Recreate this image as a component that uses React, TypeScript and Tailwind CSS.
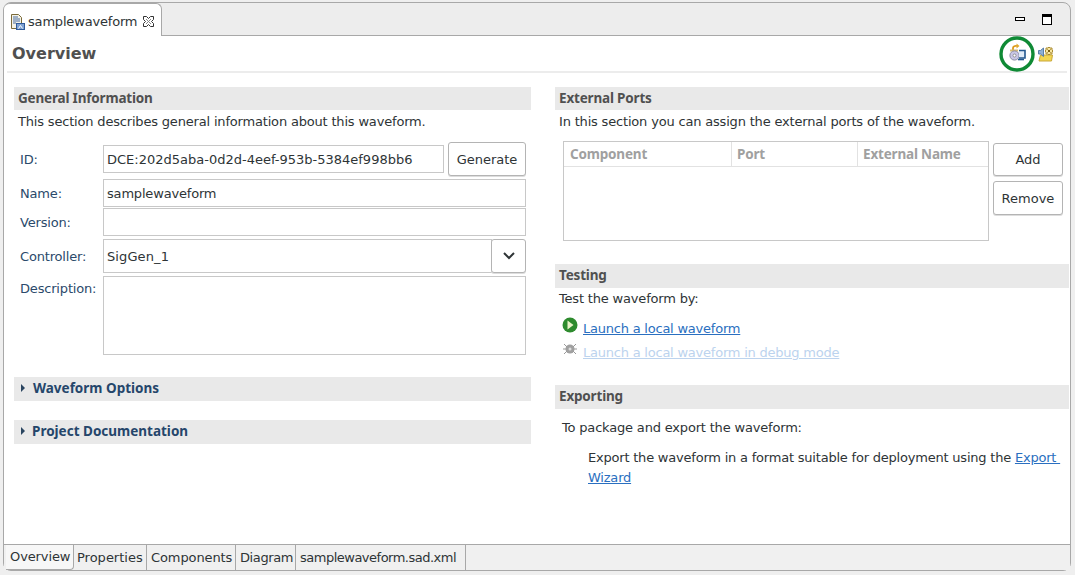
const font = "font-['DejaVu_Sans',sans-serif]";
const boldFont = "font-['Noto_Sans',sans-serif] font-bold text-[13.5px]";

function FileIcon() {
  return (
    <svg width="16" height="16" viewBox="0 0 16 16" className="shrink-0">
      <path d="M1.500 0.500h7l3 3v11h-10z" fill="#f4f2e6" stroke="#7a6a3a" />
      <path d="M3 3h5M3 5h7M3 7h7M3 9h3" stroke="#4a6fa5" />
      <rect x="6.500" y="9.500" width="8" height="6" fill="#7fa2d3" stroke="#2f5a99" />
      <path d="M8.500 14.500l2-3 2 3" stroke="#fff" fill="none" />
    </svg>
  );
}

function CloseIcon() {
  return (
    <svg width="11" height="11" viewBox="0 0 11 11" className="shrink-0">
      <path d="M.5.500h3L5.500 2.500 7.500.500h3v3L8.500 5.500l2 2v3h-3L5.500 8.500l-2 2h-3v-3L2.500 5.500l-2-2z" fill="#fff" stroke="#333" strokeWidth="1" />
      <path d="M3 3l5 5M8 3l-5 5" stroke="#888" strokeWidth="1" />
    </svg>
  );
}

function SectionHead({ children, className = "h-[23px]" }: { children: React.ReactNode; className?: string }) {
  return <div className={"bg-[#e9e9e9] pl-[4px] flex items-center text-[#505050] " + boldFont + " " + className}>{children}</div>;
}

function Collapsed({ children, gap }: { children: React.ReactNode; gap: string }) {
  return (
    <div className={"h-[24px] pb-[2px] bg-[#e9e9e9] flex items-center text-[#25466b] tracking-normal " + boldFont}>
      <svg width="6" height="8" viewBox="0 0 6 8" className={"ml-[6px] " + gap}><path d="M1 0l4 4-4 4z" fill="#2a4560" /></svg>
      {children}
    </div>
  );
}

function Btn({ children, className = "" }: { children: React.ReactNode; className?: string }) {
  return <div className={"border border-[#b4b4b4] rounded-[3px] bg-white flex items-center justify-center text-[#2e3436] tracking-normal shadow-[0_1px_0_#ddd] " + className}>{children}</div>;
}

function Field({ children, className = "" }: { children?: React.ReactNode; className?: string }) {
  return <div className={"border border-[#c8c8c8] bg-white flex items-center pl-[3px] pt-[1px] text-[#2e3436] " + className}>{children}</div>;
}

function Row({ label, className, top = false, children }: { label: string; className: string; top?: boolean; children: React.ReactNode }) {
  return (
    <div className={"flex " + (top ? "items-start " : "items-center ") + className}>
      <div className={"w-[89px] shrink-0 pl-[6px] text-[#2b4a6b] " + (top ? "pt-[3px]" : "pt-[1px]")}>{label}</div>
      <div className="flex-1 min-w-0">{children}</div>
    </div>
  );
}

export default function App() {
  return (
    <div className={"w-[1075px] h-[575px] bg-[#efefef] pt-[2px] pl-[3px] overflow-hidden text-[13px] tracking-[-0.18px] " + font}>
      <div className="w-[1068px] h-[569px] border border-[#a8a8a8] rounded-[8px] bg-[#ededed] flex flex-col">
        <div className="h-[32px] flex shrink-0 justify-between">
          <div className="w-[158px] h-[33px] -mb-px relative bg-white border-r border-t border-[#a8a8a8] rounded-tr-[6px] rounded-tl-[6px] flex items-center pl-[6px] text-[#2e3436] pt-[3px]">
            <FileIcon />
            <span className="ml-[2px]">samplewaveform</span>
            <span className="ml-[6px]"><CloseIcon /></span>
          </div>
          <div className="flex items-center gap-[17px] pr-[18px] pt-[1px]">
            <div className="w-[10px] h-[4px] border border-black mb-[2px] bg-white" />
            <div className="w-[10px] h-[11px] border border-black border-t-[3px] bg-white" />
          </div>
        </div>
        <div className="flex-1 bg-white border-t border-[#a8a8a8] flex flex-col min-h-0">
          <div className="h-[35px] shrink-0 flex items-center justify-between pl-[8px] pr-[16px] relative z-10">
            <span className="font-bold text-[16px] tracking-normal text-[#505050]">Overview</span>
            <div className="flex items-center gap-[3px]">
              <svg width="36" height="38" viewBox="0 0 36 38" className="-my-[3px]">
                <circle cx="18" cy="19" r="16" fill="none" stroke="#0f8a35" strokeWidth="3.400" />
                <path d="M14 15v-2c0-1.500 2-2.500 4-2" fill="none" stroke="#dd9a1c" strokeWidth="1.800" />
                <path d="M17.500 8.500l3 2.500-3 2.500z" fill="#e2a92c" />
                <path d="M11 14.500h8v2h-8z" fill="#d9bd72" />
                <circle cx="15.500" cy="20.500" r="4.600" fill="#c9c6e6" stroke="#8d8da3" />
                <circle cx="15.500" cy="20.500" r="1.500" fill="#fff" stroke="#777" strokeWidth="0.700" />
                <path d="M20 15.500h6v7.500h-6" fill="#dfeaf7" stroke="#24578f" strokeWidth="1.600" />
                <path d="M19 24.500h6" stroke="#24578f" strokeWidth="1.600" />
              </svg>
              <svg width="16" height="16" viewBox="0 0 16 16">
                <path d="M2.500 9h12l-1 6H1z" fill="#f3d651" stroke="#c9a83a" />
                <path d="M.5 4.500h2l3-2.500v8.500l-3-2.500h-2z" fill="#8fb0d6" stroke="#5a7fa9" />
                <path d="M8 2h2l1-1 1 1h2v2l1 1-1 1v2h-2l-1 1-1-1H8V6L7 5l1-1z" fill="#f7e6a0" stroke="#a98a30" />
                <path d="M9.500 3.500l3 3M12.500 3.500l-3 3" stroke="#7a5a10" />
              </svg>
            </div>
          </div>
          <div className="h-[2px] shrink-0 bg-[#ececec] ml-[3px] mr-[3px]" />
          <div className="flex-1 flex pl-[10px] pr-[1px] pt-[14px] gap-[24px] min-h-0">
            <div className="w-[517px]">
              <SectionHead>General Information</SectionHead>
              <div className="pl-[4px] mt-[2px] h-[18px] text-[#2e3436]">This section describes general information about this waveform.</div>
              <div className="mt-[12px] pr-[5px]">
                <Row label="ID:" className="h-[34px]">
                  <div className="flex items-center gap-[4px]">
                    <Field className="w-[341px] h-[28px] tracking-normal">DCE:202d5aba-0d2d-4eef-953b-5384ef998bb6</Field>
                    <Btn className="flex-1 h-[34px] pt-[1px]">Generate</Btn>
                  </div>
                </Row>
                <Row label="Name:" className="h-[28px] mt-[3px]"><Field className="h-[28px]">samplewaveform</Field></Row>
                <Row label="Version:" className="h-[28px] mt-[1px]"><Field className="h-[28px]" /></Row>
                <Row label="Controller:" className="h-[34px] mt-[3px]">
                  <div className="flex h-[34px]">
                    <Field className="flex-1 h-[34px] tracking-[0.1px]">SigGen_1</Field>
                    <Btn className="w-[35px] h-[34px] -ml-px">
                      <svg width="12" height="8" viewBox="0 0 12 8"><path d="M1 1l5 5 5-5" fill="none" stroke="#2e3436" strokeWidth="2" /></svg>
                    </Btn>
                  </div>
                </Row>
                <Row label="Description:" top className="h-[79px] mt-[3px]"><Field className="h-[79px]" /></Row>
              </div>
              <div className="mt-[22px]"><Collapsed gap="mr-[7px]">Waveform Options</Collapsed></div>
              <div className="mt-[19px]"><Collapsed gap="mr-[6px]">Project Documentation</Collapsed></div>
            </div>
            <div className="w-[514px]">
              <SectionHead>External Ports</SectionHead>
              <div className="pl-[4px] mt-[2px] h-[18px] text-[#2e3436]">In this section you can assign the external ports of the waveform.</div>
              <div className="mt-[11px] pl-[8px] flex gap-[4px] pr-[6px]">
                <div className="w-[426px] h-[100px] border border-[#c8c8c8]">
                  <div className={"h-[25px] grid grid-cols-[167px_126px_1fr] border-b border-[#e2e2e2] text-[#a0a0a0] items-center " + boldFont}>
                    <div className="pl-[6px]">Component</div>
                    <div className="pl-[5px] border-l border-[#e2e2e2] h-full flex items-center">Port</div>
                    <div className="pl-[5px] border-l border-[#e2e2e2] h-full flex items-center">External Name</div>
                  </div>
                </div>
                <div className="flex-1 flex flex-col pt-[2px]">
                  <Btn className="h-[33px]">Add</Btn>
                  <Btn className="h-[34px] mt-[5px] pt-[1px]">Remove</Btn>
                </div>
              </div>
              <div className="mt-[23px]"><SectionHead className="h-[24px] pb-[2px]">Testing</SectionHead></div>
              <div className="pl-[4px] mt-[1px] h-[18px] text-[#2e3436]">Test the waveform by:</div>
              <div className="pl-[7px] mt-[9px] flex items-center gap-[5px] h-[24px] tracking-[-0.22px]">
                <svg width="16" height="16" viewBox="0 0 16 16" className="mt-[-7px]">
                  <circle cx="8" cy="8" r="7.500" fill="#2e8b2e" />
                  <path d="M5.500 3.500l6 4.500-6 4.500z" fill="#e9f3c8" />
                </svg>
                <span className="text-[#2a6fc0] underline pt-[1px]">Launch a local waveform</span>
              </div>
              <div className="pl-[7px] flex items-center gap-[5px] h-[24px] tracking-[-0.22px]">
                <svg width="16" height="16" viewBox="0 0 16 16" className="mt-[-7px]">
                  <circle cx="8" cy="8" r="4.500" fill="#a0a0a0" />
                  <path d="M2 3l3 3M14 3l-3 3M1 8h3M12 8h3M2 13l3-3M14 13l-3-3" stroke="#9a9a9a" />
                  <circle cx="8" cy="8" r="1.500" fill="#ddd" />
                </svg>
                <span className="text-[#bcd3ee] underline pt-[1px]">Launch a local waveform in debug mode</span>
              </div>
              <div className="mt-[21px]"><SectionHead className="h-[24px] pb-[2px]">Exporting</SectionHead></div>
              <div className="pl-[7px] mt-[9px] h-[18px] text-[#2e3436]">To package and export the waveform:</div>
              <div className="pl-[33px] mt-[12px] leading-[20px] text-[#2e3436] tracking-[-0.21px]">
                <div className="whitespace-pre">Export the waveform in a format suitable for deployment using the <span className="text-[#2a6fc0] underline">Export </span></div>
                <div><span className="text-[#2a6fc0] underline">Wizard</span></div>
              </div>
            </div>
          </div>
          <div className="h-[26px] shrink-0 border-t border-[#a8a8a8] bg-[#f0f0f0] flex text-[#2e3436] pl-[2px]">
            <div className="w-[68px] h-[25px] bg-[#f7f7f7] border-r border-b border-[#a8a8a8] rounded-br-[4px] flex items-center pl-[4px] tracking-[-0.1px]">Overview</div>
            <div className="w-[73px] border-r border-[#a8a8a8] flex items-center pl-[3px] tracking-normal">Properties</div>
            <div className="w-[89px] border-r border-[#a8a8a8] flex items-center pl-[4px] tracking-[-0.1px]">Components</div>
            <div className="w-[60px] border-r border-[#a8a8a8] flex items-center pl-[4px] tracking-[-0.4px]">Diagram</div>
            <div className="w-[170px] border-r border-[#a8a8a8] flex items-center pl-[4px] tracking-[-0.5px]">samplewaveform.sad.xml</div>
          </div>
        </div>
      </div>
    </div>
  );
}
